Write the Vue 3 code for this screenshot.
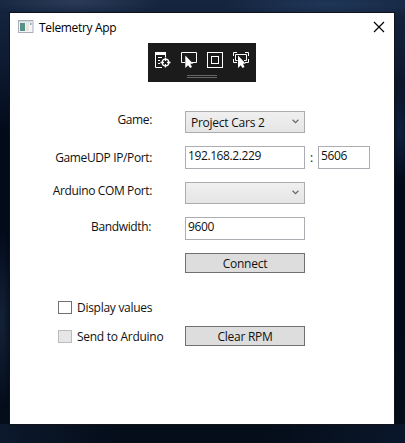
<script setup>
import { ref } from 'vue'

const game = ref('Project Cars 2')
const ip = ref('192.168.2.229')
const port = ref('5606')
const bandwidth = ref('9600')
</script>

<template>
  <div class="desktop">
    <main class="window">
      <header class="titlebar">
        <svg class="app-icon" width="16" height="14" viewBox="0 0 16 14">
          <rect x="0.5" y="0.5" width="14.5" height="12" fill="#f3f5f7" stroke="#a9adb6" />
          <rect x="1" y="1" width="13.5" height="1.5" fill="#d5dbe3" />
          <rect x="2" y="3" width="5" height="8" fill="#559289" />
          <rect x="8" y="3" width="3" height="8" fill="#e9e5dc" />
          <rect x="12" y="3" width="1.5" height="2" fill="#8fa3bd" />
        </svg>
        <h1 class="title">Telemetry App</h1>
        <svg class="close" width="12" height="12" viewBox="0 0 12 12">
          <path d="M1 1L11 11M11 1L1 11" stroke="#000" stroke-width="1.15" />
        </svg>
      </header>

      <div class="debugbar">
        <div class="tools">
          <svg width="18" height="18" viewBox="0 0 18 18" fill="none" stroke="#fff">
            <path d="M1 2.5H12" stroke-width="3" />
            <path d="M1.5 2V16.5H8M11.5 2V6M4 6.5H8M4 9.5H6M4 12.5H6" />
            <circle cx="11.5" cy="11.5" r="3.3" stroke-width="1.3" />
            <path d="M11.5 6.5V10M11.5 13V16.5M6.5 11.5H10M13 11.5H16.5" stroke-width="1.3" />
          </svg>
          <svg width="18" height="18" viewBox="0 0 18 18" fill="none" stroke="#fff">
            <path d="M5 11.5H1.5V1.5H16.5V11.5H12" />
            <path d="M5.3 4.5V17L8.2 14.2L10 17L12 16L10.3 12.8H13.2Z" fill="#fff" stroke="none" />
          </svg>
          <svg width="18" height="18" viewBox="0 0 18 18" fill="none" stroke="#fff">
            <rect x="1.5" y="1.5" width="15" height="15" />
            <rect x="5.5" y="5.5" width="7" height="7" />
          </svg>
          <svg width="18" height="18" viewBox="0 0 18 18" fill="none" stroke="#fff">
            <path d="M1.5 5V1.5H5M13 1.5H16.5V5M1.5 8V11.5H5M16.5 8V11.5H13M5.5 9.5H3.5V3.5H14.5V9.5H12" />
            <path d="M6 4.5V17L8.8 14.2L10.5 17L12.5 16L11 12.8H13.7Z" fill="#fff" stroke="none" />
          </svg>
        </div>
        <div class="grip"></div>
      </div>

      <form class="form" @submit.prevent>
        <label class="label game-label">Game:</label>
        <div class="combo">
          <span>{{ game }}</span>
          <svg width="7" height="5" viewBox="0 0 7 5"><path d="M.6 .8L3.5 3.6L6.4 .8" fill="none" stroke="#666" stroke-width="1.2" /></svg>
        </div>

        <label class="label ip-label">GameUDP IP/Port:</label>
        <div class="address">
          <div class="field num">{{ ip }}</div>
          <span class="colon">:</span>
          <div class="field port num">{{ port }}</div>
        </div>

        <label class="label com-label">Arduino COM Port:</label>
        <div class="combo">
          <span></span>
          <svg width="7" height="5" viewBox="0 0 7 5"><path d="M.6 .8L3.5 3.6L6.4 .8" fill="none" stroke="#666" stroke-width="1.2" /></svg>
        </div>

        <label class="label band-label">Bandwidth:</label>
        <div class="field num">{{ bandwidth }}</div>

        <span></span>
        <button class="button" type="button">Connect</button>

        <div class="check display"><i class="box"></i><span>Display values</span></div>
        <span></span>

        <div class="check send"><i class="box disabled"></i><span>Send to Arduino</span></div>
        <button class="button clear" type="button">Clear RPM</button>
      </form>
    </main>
  </div>
</template>

<style>
body {
  margin: 0;
  overflow: hidden;
}
</style>

<style scoped>
* {
  box-sizing: border-box;
}
.desktop {
  width: 405px;
  height: 443px;
  padding: 13px 11px 19px 10px;
  background:
    radial-gradient(ellipse 90px 14px at 75px 2px, #2b3c58, transparent),
    radial-gradient(ellipse 110px 14px at 330px 4px, #20375a, transparent),
    radial-gradient(ellipse 12px 50px at 400px 130px, #0f2240, transparent),
    radial-gradient(ellipse 12px 90px at 2px 320px, #142238, transparent),
    linear-gradient(90deg, #0c182c, transparent 30%, transparent 65%, #0a162a) 0 424px / 100% 19px no-repeat,
    linear-gradient(#15253f 0, #0e1b32 60px, #030b1b 130px, #020a1a 300px, #040d19 443px);
  font-family: "Open Sans", "Noto Sans", sans-serif;
  font-size: 12px;
  line-height: 16px;
  letter-spacing: -0.25px;
  color: #111;
}
.window {
  width: 384px;
  height: 411px;
  background: #fff;
  outline: 1px solid #101418;
}
.titlebar {
  display: flex;
  align-items: center;
  height: 30px;
  padding: 0 9px 2px 8px;
}
.title {
  flex: 1;
  margin: 2px 0 0 5px;
  font-size: 12px;
  font-weight: 400;
  letter-spacing: -0.33px;
  color: #000;
}
.debugbar {
  width: 108px;
  height: 39px;
  margin-left: 138px;
  padding: 8px 6px 0;
  background: #1b1b1c;
}
.tools {
  display: flex;
  gap: 8px;
  height: 24px;
}
.grip {
  width: 30px;
  height: 3px;
  margin: 0 auto;
  border: solid #656565;
  border-width: 1px 0;
}
.form {
  display: grid;
  grid-template-columns: 142px 185px;
  column-gap: 33px;
  grid-template-rows: 35px 36px 35px 36px 48px 25px 20px;
  padding-top: 29px;
}
.label {
  letter-spacing: -0.37px;
  text-align: right;
}
.game-label { padding-top: 1px; }
.ip-label { padding-top: 4px; }
.com-label { padding-top: 1px; }
.band-label { padding: 2px 1px 0 0; }
.combo {
  display: flex;
  align-items: center;
  justify-content: space-between;
  width: 120px;
  height: 22px;
  padding: 1px 5px 0 5px;
  border: 1px solid #acacac;
  background: linear-gradient(#f0f0f0, #e5e5e5);
}
.combo svg {
  margin-bottom: 2px;
}
.field {
  width: 120px;
  height: 23px;
  padding: 1px 2px 0;
  border: 1px solid #abadb3;
  background: #fff;
}
.num {
  letter-spacing: -0.4px;
}
.address {
  display: flex;
}
.colon {
  width: 13px;
  padding-top: 4px;
  text-align: center;
}
.port {
  width: 52px;
}
.button {
  width: 120px;
  height: 20px;
  padding: 1px 0 0;
  border: 1px solid #707070;
  background: #ddd;
  font: inherit;
  letter-spacing: inherit;
  color: inherit;
}
.check {
  display: flex;
  padding-left: 48px;
  letter-spacing: -0.28px;
  white-space: nowrap;
}
.box {
  flex: none;
  width: 14px;
  height: 13px;
  margin-right: 5px;
  border: 1px solid #707070;
  background: #fff;
}
.disabled {
  border-color: #bcbcbc;
  background: #e6e6e6;
}
.send {
  padding-top: 4px;
}
.check span {
  margin-top: -1px;
}
</style>
